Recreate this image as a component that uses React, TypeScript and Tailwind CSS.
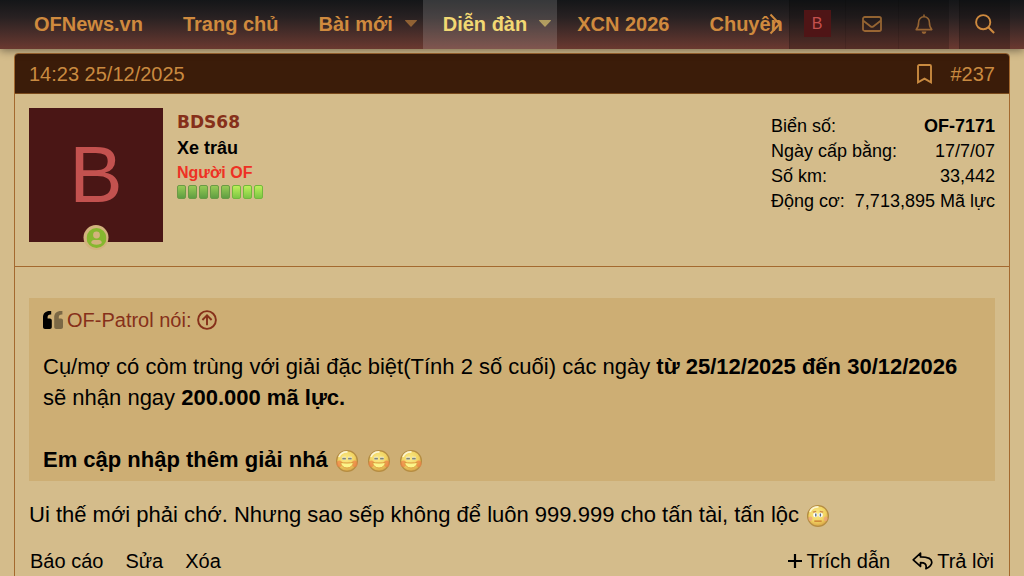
import type { ReactNode } from "react";

interface INavItem {
  label: string;
  active?: boolean;
  hasMenu?: boolean;
}

const navItems: INavItem[] = [
  { label: "OFNews.vn" },
  { label: "Trang chủ" },
  { label: "Bài mới", hasMenu: true },
  { label: "Diễn đàn", hasMenu: true, active: true },
  { label: "XCN 2026" },
  { label: "Chuyên đề" },
];

const userInfo = [
  { label: "Biển số:", value: "OF-7171", bold: true },
  { label: "Ngày cấp bằng:", value: "17/7/07" },
  { label: "Số km:", value: "33,442" },
  { label: "Động cơ:", value: "7,713,895 Mã lực" },
];

const pips = [false, false, false, false, false, true, true, true];

const Caret = () => (
  <svg viewBox="0 0 12 7" className="h-[7px] w-3 fill-current opacity-60">
    <path d="M0.5 0h11a.5.5 0 0 1 .4.8L6.5 6.6a.7.7 0 0 1-1 0L.1.8A.5.5 0 0 1 .5 0Z" />
  </svg>
);

const Smiley = ({ sad = false }: { sad?: boolean }) => (
  <svg
    viewBox="0 0 24 24"
    role="img"
    aria-label={sad ? "buồn" : "cười"}
    className="mx-px inline-block h-6 w-6 align-[-6px]"
  >
    <defs>
      <radialGradient id={sad ? "face-sad" : "face-grin"} cx="45%" cy="38%" r="62%">
        <stop offset="0%" stopColor="#fbeb86" />
        <stop offset="65%" stopColor="#f1d362" />
        <stop offset="100%" stopColor="#d6a044" />
      </radialGradient>
    </defs>
    <circle
      cx="12"
      cy="12"
      r="10.4"
      fill={sad ? "url(#face-sad)" : "url(#face-grin)"}
      stroke="#b58d42"
      strokeWidth="1.3"
    />
    <path d="M4 8C5.500 4 9 2.700 12.500 2.900" stroke="#fffbe0" strokeWidth="1.800" fill="none" opacity=".85" />
    {sad ? (
      <>
        <ellipse cx="4.400" cy="14.800" rx="2" ry="2.400" fill="#f0a080" opacity=".7" />
        <ellipse cx="19.600" cy="14.800" rx="2" ry="2.400" fill="#f0a080" opacity=".7" />
        <path d="M6.800 8.200 10.200 7.300M13.800 7.300l3.400.9" stroke="#cf8a48" strokeWidth="1.300" fill="none" />
        <ellipse cx="9.400" cy="11" rx="2.300" ry="2.200" fill="#fff" />
        <ellipse cx="14.600" cy="11" rx="2.300" ry="2.200" fill="#fff" />
        <path d="M9.800 9.400v3.200M14.400 9.400v3.200" stroke="#5b6b80" strokeWidth="1.400" />
        <path d="M8.300 17.200h7.400" stroke="#cf8a38" strokeWidth="1.700" />
      </>
    ) : (
      <>
        <ellipse cx="4.400" cy="14.800" rx="2.800" ry="3.200" fill="#ee8247" opacity=".7" />
        <ellipse cx="19.600" cy="14.800" rx="2.800" ry="3.200" fill="#ee8247" opacity=".7" />
        <path d="M7 9.200h4M13 9.200h4" stroke="#fff" strokeWidth="3" opacity=".6" />
        <path d="M7.300 9.600h3.600M13.100 9.600h3.600" stroke="#7f8578" strokeWidth="1.600" />
        <path d="M5.600 13.400c3.600.8 9.200.8 12.800 0-.5 3.600-3 5.600-6.400 5.600s-5.900-2-6.400-5.600Z" fill="#fbf58a" stroke="#dd9a3e" strokeWidth="1" />
      </>
    )}
  </svg>
);

const NavButton = ({ label, className, children }: { label: string; className: string; children: ReactNode }) => (
  <button
    type="button"
    aria-label={label}
    className={`flex h-full items-center justify-center border-l border-black/10 bg-black/20 pr-px pb-[2px] ${className}`}
  >
    {children}
  </button>
);

const Header = () => (
  <header className="relative z-10 flex h-[49px] bg-linear-to-b from-[#141618] via-[#282122] via-35% to-[#6b3930] px-[14px] text-[#cf8a3e] shadow-[0_2px_8px_rgba(20,20,20,0.45)]">
    <nav className="relative flex min-w-0 flex-1 overflow-hidden">
      {navItems.map((item) => (
        <a
          key={item.label}
          href="#"
          className={`flex shrink-0 items-center gap-3 pb-[2px] pl-5 text-xl font-bold whitespace-nowrap ${
            item.hasMenu ? "pr-[6px]" : "pr-5"
          } ${item.active ? "bg-white/15 text-[#f2d873]" : ""}`}
        >
          {item.label}
          {item.hasMenu && <Caret />}
        </a>
      ))}
      <button type="button" aria-label="Cuộn menu" className="absolute top-0 right-0 flex h-full w-7 items-center pb-[2px] pl-2">
        <svg viewBox="0 0 12 22" className="h-[22px] w-3" fill="none" stroke="currentColor" strokeWidth="2">
          <path d="M1.500 1.500 10.500 11l-9 9.500" />
        </svg>
      </button>
    </nav>

    <div className="flex shrink-0">
      <NavButton label="Tài khoản" className="w-14">
        <span className="flex h-[27px] w-[27px] items-center justify-center bg-[#4f1516] text-base text-[#c4514e]">B</span>
      </NavButton>
      <NavButton label="Hộp thư" className="w-[53px]">
        <svg viewBox="0 0 20 16" className="h-4 w-5 opacity-65" fill="none" stroke="currentColor" strokeWidth="1.800">
          <rect x="1" y="1" width="18" height="14" rx="1.800" />
          <path d="m1 4.500 7.400 5.700a2.600 2.600 0 0 0 3.200 0L19 4.500" />
        </svg>
      </NavButton>
      <NavButton label="Thông báo" className="w-[51px]">
        <svg viewBox="0 0 18 20" className="h-5 w-[18px] opacity-65" fill="none" stroke="currentColor" strokeWidth="1.600">
          <path d="M9 .5v2M1.200 15.600h15.600c-1.600-1.600-2.400-2.800-2.400-7A5.400 5.400 0 0 0 9 2.700a5.400 5.400 0 0 0-5.400 5.900c0 4.200-.8 5.400-2.400 7Z" strokeLinejoin="round" />
          <path d="M6.600 17.500h4.800a2.400 2.400 0 0 1-4.800 0Z" fill="currentColor" stroke="none" />
        </svg>
      </NavButton>
      <NavButton label="Tìm kiếm" className="ml-[10px] w-[51px]">
        <svg viewBox="0 0 20 20" className="h-5 w-5" fill="none" stroke="currentColor" strokeWidth="1.900">
          <circle cx="8.200" cy="8.200" r="7.100" />
          <path d="m13.300 13.300 5.800 5.800" strokeWidth="2.100" />
        </svg>
      </NavButton>
    </div>
  </header>
);

const UserCell = () => (
  <section className="flex h-[173px] items-start border-b border-[#a4692f] px-[14px] pt-[14px]">
    <div className="relative flex h-[134px] w-[134px] shrink-0 items-center justify-center bg-[#4a1615] text-[80px] text-[#c3524f]">
      B
      <span className="absolute -bottom-2 left-1/2 flex h-[25px] w-[25px] -translate-x-1/2 items-center justify-center rounded-full bg-[#d3b37d]">
        <svg viewBox="0 0 20 20" className="h-5 w-5">
          <circle cx="10" cy="10" r="10" fill="#86b72f" />
          <circle cx="10" cy="7" r="3.400" fill="#d3b37d" />
          <path d="M4.800 14.500c0-1.500 1.200-2.600 2.700-2.600h5c1.500 0 2.700 1.100 2.700 2.600 0 1.300-2.300 2.200-5.200 2.200s-5.200-.9-5.200-2.200Z" fill="#d3b37d" />
        </svg>
      </span>
    </div>

    <div className="ml-[14px]">
      <h4 className="font-['DejaVu_Sans',sans-serif] text-[17px] leading-7 font-bold">
        <a href="#" className="text-[#86301a]">BDS68</a>
      </h4>
      <p className="text-lg leading-[25px] font-bold">Xe trâu</p>
      <p className="text-base leading-6 font-bold text-[#ee3124]">Người OF</p>
      <div className="flex gap-[2px]">
        {pips.map((bright, i) => (
          <span
            key={i}
            className={`h-[14px] w-[9px] rounded-xs border ${
              bright
                ? "border-[#72b83c] bg-linear-to-b from-[#bdf05a] to-[#7cc644]"
                : "border-[#6b9a45] bg-linear-to-b from-[#97cb55] to-[#5f9e42]"
            }`}
          />
        ))}
      </div>
    </div>

    <dl className="mt-[6px] ml-auto text-lg leading-[25px]">
      {userInfo.map((row) => (
        <div key={row.label} className="flex justify-between gap-[10px]">
          <dt>{row.label}</dt>
          <dd className={row.bold ? "font-bold" : ""}>{row.value}</dd>
        </div>
      ))}
    </dl>
  </section>
);

const Quote = () => (
  <blockquote className="bg-[#cdae74] px-[14px] pt-2 pb-[6px]">
    <a href="#" className="flex items-center text-xl leading-7 text-[#86301a]">
      <svg viewBox="0 0 20 18" className="mr-1 h-[18px] w-5 text-black" fill="currentColor">
        <path d="M8.200 0v3.400H7.400C5.600 3.400 4.600 4.400 4.600 6.200v1.200h2.200c1.200 0 2 .8 2 2V16c0 1.200-.8 2-2 2H2c-1.200 0-2-.8-2-2V6.400C0 2.400 2.600 0 6.600 0Z" />
        <path d="M19.400 0v3.400h-.8c-1.800 0-2.800 1-2.800 2.800v1.200H18c1.200 0 2 .8 2 2V16c0 1.200-.8 2-2 2h-4.800c-1.200 0-2-.8-2-2V6.400c0-4 2.600-6.400 6.600-6.400Z" opacity=".4" />
      </svg>
      OF-Patrol nói:
      <svg viewBox="0 0 20 20" className="ml-[6px] h-5 w-5" fill="none" stroke="currentColor" strokeWidth="1.900">
        <circle cx="10" cy="10" r="8.900" />
        <path d="M10 15.200V5.600M5.400 10 10 5.400l4.600 4.600" />
      </svg>
    </a>
    <div className="mt-[17px] text-[22px] leading-[31px]">
      Cụ/mợ có còm trùng với giải đặc biệt(Tính 2 số cuối) các ngày <b>từ 25/12/2025 đến 30/12/2026</b> sẽ
      nhận ngay <b>200.000 mã lực.</b>
      <br />
      <br />
      <b>
        Em cập nhập thêm giải nhá <Smiley /> <Smiley /> <Smiley />
      </b>
    </div>
  </blockquote>
);

const App = () => (
  <div className="min-h-screen bg-[#d4bc8b] font-['Liberation_Sans',sans-serif] text-black">
    <Header />
    <main className="px-[14px] pt-1">
      <article className="overflow-hidden rounded-t border border-[#a4692f]">
        <div className="flex h-10 items-center border-b border-[#7a4a1c] bg-[#3b1c09] px-[14px] text-xl text-[#c98a40]">
          <a href="#">14:23 25/12/2025</a>
          <button type="button" aria-label="Đánh dấu" className="mr-[19px] ml-auto">
            <svg viewBox="0 0 15 20" className="h-5 w-[15px]" fill="none" stroke="currentColor" strokeWidth="1.900">
              <path d="M1 2.200C1 1.500 1.500 1 2.200 1h10.600c.7 0 1.200.5 1.200 1.200V18.300l-6.500-3.700L1 18.300Z" />
            </svg>
          </button>
          <a href="#">#237</a>
        </div>

        <UserCell />

        <div className="px-[14px] pt-[31px] pb-3">
          <Quote />
          <p className="mt-[18px] text-[22px] leading-[31px]">
            Ui thế mới phải chớ. Nhưng sao sếp không để luôn 999.999 cho tấn tài, tấn lộc <Smiley sad />
          </p>
          <footer className="mt-[17px] flex items-center justify-between px-px text-xl leading-7">
            <div className="flex gap-[22px]">
              <a href="#">Báo cáo</a>
              <a href="#">Sửa</a>
              <a href="#">Xóa</a>
            </div>
            <div className="flex gap-[22px]">
              <a href="#" className="flex items-center gap-1">
                <svg viewBox="0 0 14 14" className="h-[14px] w-[14px]" fill="none" stroke="currentColor" strokeWidth="2.200">
                  <path d="M7 0v14M0 7h14" />
                </svg>
                Trích dẫn
              </a>
              <a href="#" className="flex items-center gap-1">
                <svg viewBox="0 0 21 18" className="h-[18px] w-[21px]" fill="none" stroke="currentColor" strokeWidth="1.700" strokeLinejoin="round">
                  <path d="M8.500 1.200 1.200 7.800l7.300 6.600V10.700c3.600 0 6.600.8 5.400 6 2.600-1.100 5.900-3.200 5.900-6.400 0-4-4.500-5.400-11.300-5.400Z" />
                </svg>
                Trả lời
              </a>
            </div>
          </footer>
        </div>
      </article>
    </main>
  </div>
);

export default App;
